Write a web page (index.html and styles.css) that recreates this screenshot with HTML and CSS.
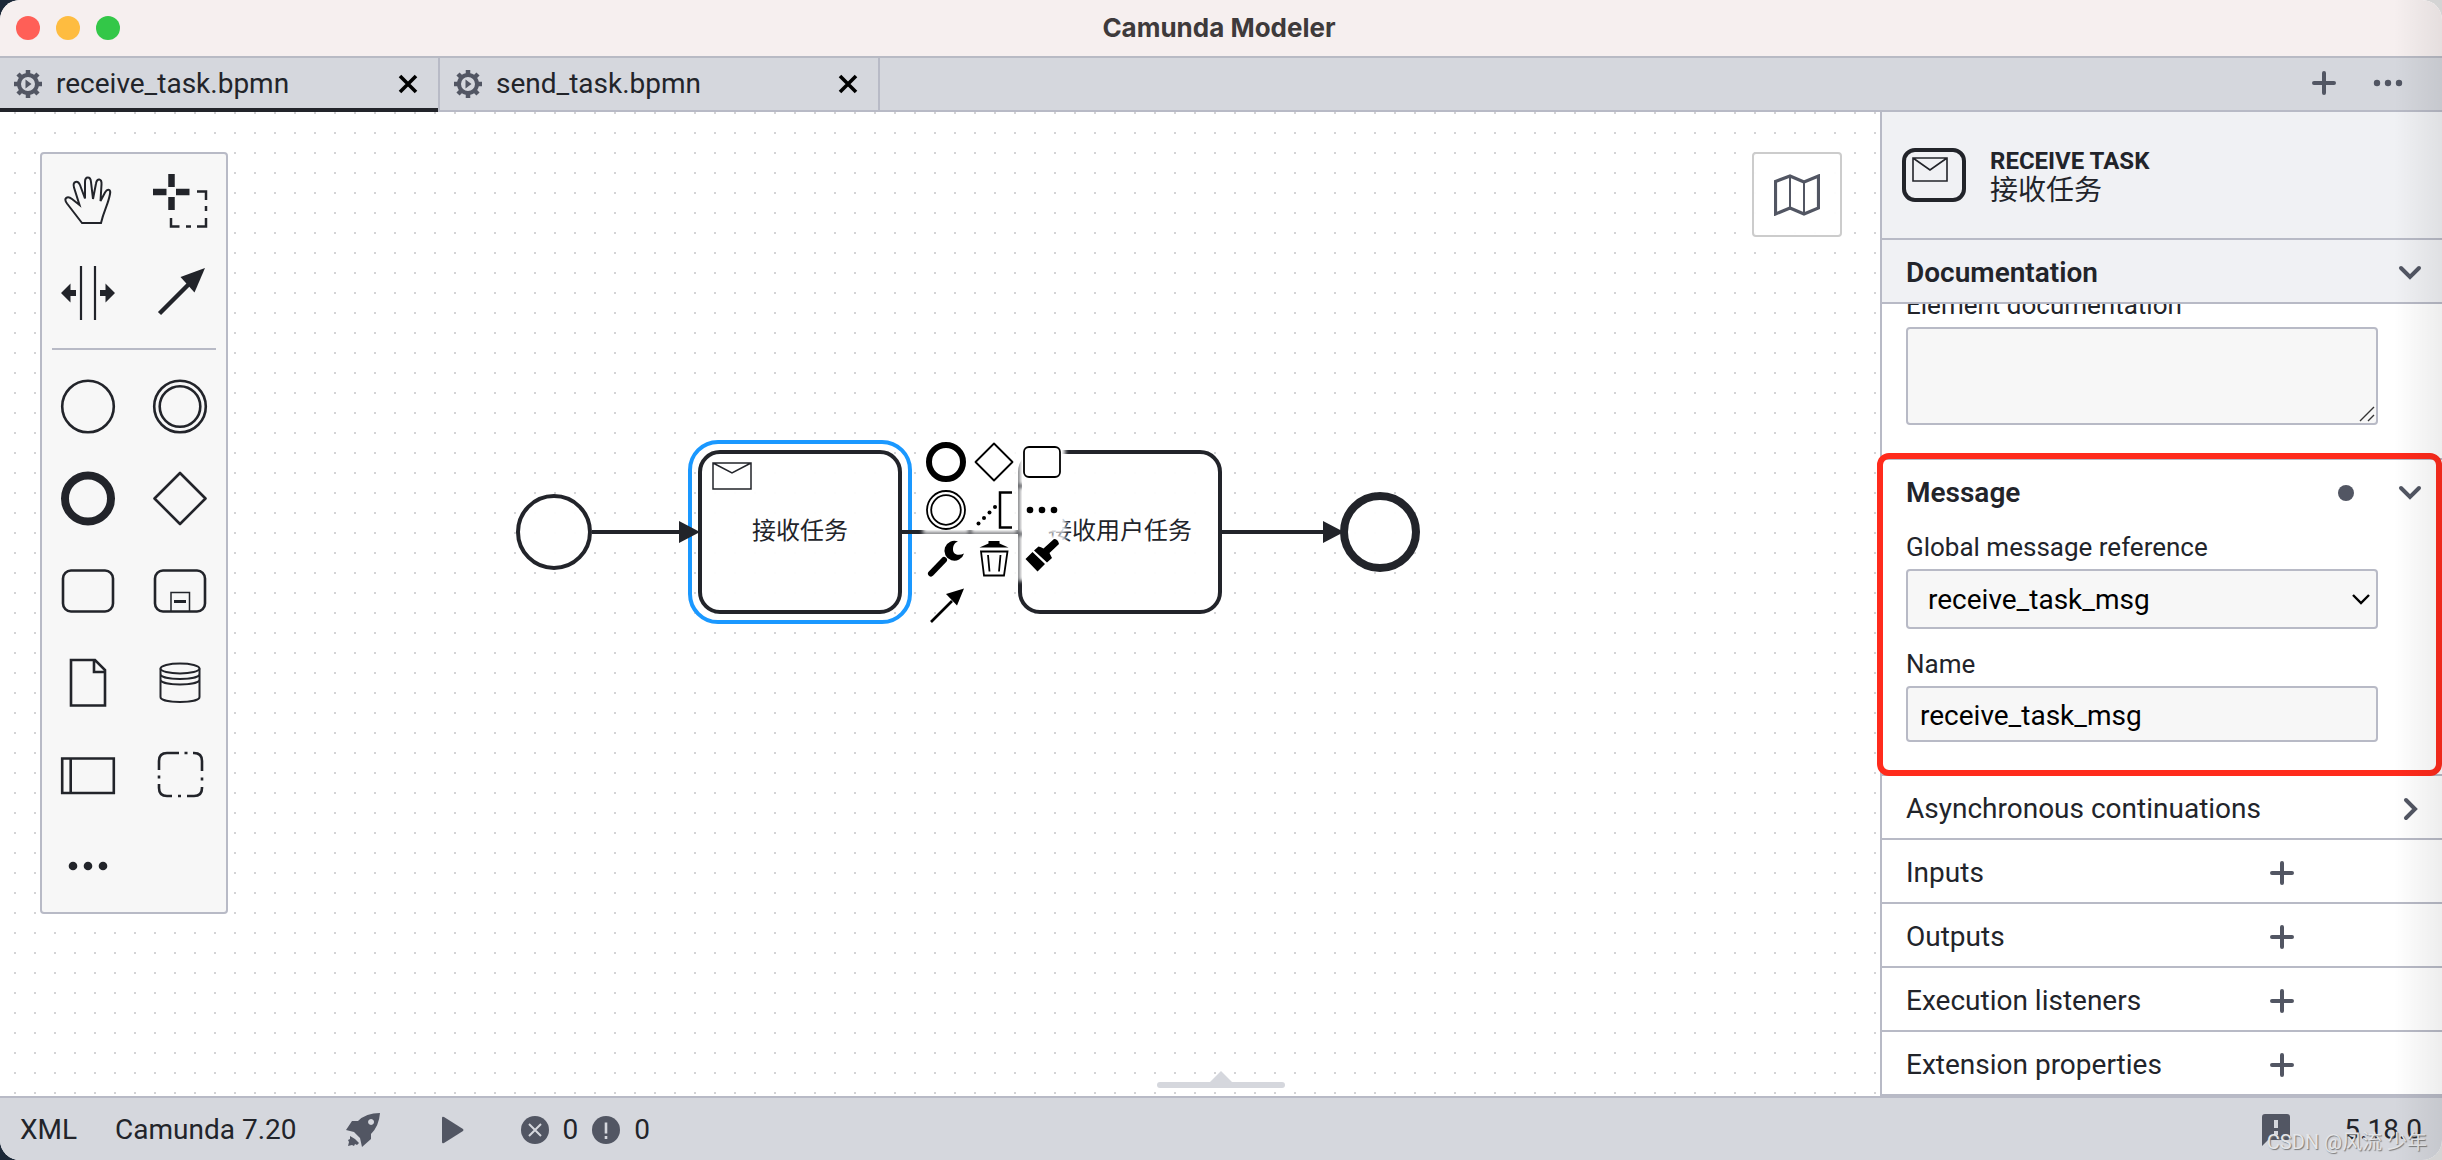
FILE: index.html
```html
<!DOCTYPE html>
<html lang="en">
<head>
<meta charset="utf-8">
<title>Camunda Modeler</title>
<link rel="stylesheet" href="styles.css">
</head>
<body>
<svg class="defs" aria-hidden="true">
  <symbol id="gear" viewBox="0 0 28 28">
    <circle cx="14" cy="14" r="9" fill="none" stroke="currentColor" stroke-width="4"/>
    <path d="M14 0v5M14 23v5M0 14h5M23 14h5M4 4l4 4M20 20l4 4M4 24l4-4M20 8l4-4" stroke="currentColor" stroke-width="4.500"/>
    <path d="M11.500 9.500l6 4.500-6 4.500z" fill="currentColor"/>
  </symbol>
  <symbol id="cross" viewBox="0 0 20 20"><path d="M2 2l16 16M18 2L2 18" stroke="currentColor" stroke-width="3.600"/></symbol>
  <symbol id="plus" viewBox="0 0 24 24"><path d="M12 2v20M2 12h20" stroke="currentColor" stroke-width="4" stroke-linecap="round"/></symbol>
  <symbol id="chevron" viewBox="0 0 24 24"><path d="M3 7l9 9 9-9" fill="none" stroke="currentColor" stroke-width="4" stroke-linecap="round"/></symbol>
  <symbol id="chevron-right" viewBox="0 0 24 24"><path d="M8 3l9 9-9 9" fill="none" stroke="currentColor" stroke-width="4" stroke-linecap="round"/></symbol>
</svg>

<header class="titlebar">
  <div class="lights"><span class="light red"></span><span class="light yellow"></span><span class="light green"></span></div>
  <h1 class="app-title">Camunda Modeler</h1>
</header>

<nav class="tabs">
  <div class="tab active">
    <svg class="tab-icon"><use href="#gear"/></svg>
    <a class="tab-name" href="#receive">receive_task.bpmn</a>
    <button class="tab-close" aria-label="Close receive_task.bpmn"><svg><use href="#cross"/></svg></button>
  </div>
  <div class="tab">
    <svg class="tab-icon"><use href="#gear"/></svg>
    <a class="tab-name" href="#send">send_task.bpmn</a>
    <button class="tab-close" aria-label="Close send_task.bpmn"><svg><use href="#cross"/></svg></button>
  </div>
  <div class="tab-tools">
    <button class="tool" aria-label="New tab"><svg><use href="#plus"/></svg></button>
    <button class="tool wide" aria-label="More"><svg viewBox="0 0 30 24" fill="currentColor"><circle cx="4" cy="12" r="3.200"/><circle cx="15" cy="12" r="3.200"/><circle cx="26" cy="12" r="3.200"/></svg></button>
  </div>
</nav>

<main class="workspace">
  <section class="canvas" aria-label="Diagram">
    <svg class="diagram">
      <g transform="translate(0 -112)" fill="none" stroke="#22242a" stroke-width="4">
        <circle cx="554" cy="532" r="36" fill="#fffffff2"/>
        <rect x="700" y="452" width="200" height="160" rx="20" fill="#fffffff2"/>
        <rect x="1020" y="452" width="200" height="160" rx="20" fill="#fffffff2"/>
        <circle cx="1380" cy="532" r="36" fill="#fffffff2" stroke-width="8"/>
        <rect x="690" y="442" width="220" height="180" rx="28" stroke="#1a98ff"/>
        <path d="M592 532h90M902 532h116M1222 532h104"/>
        <path d="M679 521l21 11-21 11zM1323 521l21 11-21 11z" fill="#22242a" stroke="none"/>
        <path d="M713 463h38v26h-38zM713 463l19 10 19-10" stroke-width="1.500"/>
        <g class="node-label" stroke="none" fill="#22242a"><text x="800" y="539">接收任务</text><text x="1120" y="539">接收用户任务</text></g>
      </g>
    </svg>

    <div class="palette">
      <div class="palette-group">
        <button class="entry" aria-label="Hand tool"><svg viewBox="0 0 60 60" stroke-width="2"><path d="M24 53L9 33.500C5 28 9.500 25.500 14 29l7.500 6L16 17.500c-2-6.500 4-7.500 6-2.500l5 13.500V12c0-6 5.500-6 6 0l2 17 3-15.500c1-6 6-5 5.500 1L42.500 31l4.500-8.500c3-5 6-2.500 5 1.500C50 35 46 40 43 53z"/></svg></button>
        <button class="entry" aria-label="Lasso tool"><svg viewBox="0 0 60 60" stroke-width="2.500"><path d="M21.500 4v13M21.500 27v13M3 22h13.500M26 22h13.500" stroke-width="6.500"/><path d="M47 21.500h9V30M56 36v5M56 48v8.500h-9M36 56.500h5M29.500 56.500H21V48"/></svg></button>
        <button class="entry" aria-label="Space tool"><svg viewBox="0 0 60 60" stroke-width="2.200"><path d="M23 4v54M37 4v54"/><path d="M3 31l9.500-9.500V28H18v6h-5.500v6.500zM57 31l-9.500-9.500V28H42v6h5.500v6.500z" fill="currentColor" stroke="none"/></svg></button>
        <button class="entry" aria-label="Connect tool"><svg viewBox="0 0 60 60" stroke-width="4.500"><path d="M9.500 51.500L40 21"/><path d="M55 6L30.500 15l14 15.500z" fill="currentColor" stroke="none"/></svg></button>
      </div>
      <hr class="separator">
      <div class="palette-group">
        <button class="entry" aria-label="Start event"><svg viewBox="0 0 60 60"><circle cx="30" cy="30.500" r="25.800"/></svg></button>
        <button class="entry" aria-label="Intermediate event"><svg viewBox="0 0 60 60"><circle cx="30" cy="30.500" r="25.800"/><circle cx="30" cy="30.500" r="20.300"/></svg></button>
        <button class="entry" aria-label="End event"><svg viewBox="0 0 60 60" stroke-width="8"><circle cx="30" cy="30.500" r="23"/></svg></button>
        <button class="entry" aria-label="Gateway"><svg viewBox="0 0 60 60" stroke-linejoin="round"><path d="M30 5l25.500 25.500L30 56 4.500 30.500z"/></svg></button>
        <button class="entry" aria-label="Task"><svg viewBox="0 0 60 60"><rect x="5" y="10.500" width="50" height="41" rx="8"/></svg></button>
        <button class="entry" aria-label="Sub-process"><svg viewBox="0 0 60 60"><rect x="5" y="10.500" width="50" height="41" rx="8"/><path d="M21 51V32.500h18.500V51" stroke-width="1.500"/><path d="M24 41.500h12" stroke-width="3"/></svg></button>
        <button class="entry" aria-label="Data object"><svg viewBox="0 0 60 60"><path d="M13 8h24l10 10v35.500H13zM36 8v12h11"/></svg></button>
        <button class="entry" aria-label="Data store"><svg viewBox="0 0 60 60" stroke-width="2"><ellipse cx="30" cy="16.500" rx="19.500" ry="5"/><path d="M10.500 16.500V45c0 6.500 39 6.500 39 0V16.500M10.500 22c0 6.500 39 6.500 39 0M10.500 27.500c0 6.500 39 6.500 39 0"/></svg></button>
        <button class="entry" aria-label="Pool"><svg viewBox="0 0 60 60"><path d="M4.200 14.500h51.600v34.500H4.200zM12.700 14.500V49"/></svg></button>
        <button class="entry" aria-label="Group"><svg viewBox="0 0 60 60"><path d="M9 26v-9q0-8 8-8h12M34.500 9h3M43 9h1q8 0 8 8v10M52 33.500v3M52 43v1q0 8-8 8h-7M31 52h-3M22 52h-5q-8 0-8-8v-4M9 34.500v-3"/></svg></button>
        <button class="entry" aria-label="More elements"><svg viewBox="0 0 60 60" stroke-width="0"><g fill="currentColor"><circle cx="15" cy="30" r="4.300"/><circle cx="30" cy="30" r="4.300"/><circle cx="45" cy="30" r="4.300"/></g></svg></button>
      </div>
    </div>

    <div class="context-pad">
      <button class="pad-entry" aria-label="Append end event"><svg viewBox="0 0 40 40" stroke-width="6"><circle cx="20" cy="20" r="17"/></svg></button>
      <button class="pad-entry" aria-label="Append gateway"><svg viewBox="0 0 40 40" stroke-linejoin="round"><path d="M20 1.500L38.500 20 20 38.500 1.500 20z"/></svg></button>
      <button class="pad-entry" aria-label="Append task"><svg viewBox="0 0 40 40"><rect x="2" y="5" width="36" height="30" rx="5"/></svg></button>
      <button class="pad-entry" aria-label="Append intermediate event"><svg viewBox="0 0 40 40"><circle cx="20" cy="20" r="19"/><circle cx="20" cy="20" r="14.800"/></svg></button>
      <button class="pad-entry" aria-label="Add text annotation"><svg viewBox="0 0 40 40"><path d="M38 2.500H26v35h12" stroke-width="2.500"/><g fill="#000" stroke="none"><circle cx="4.500" cy="33.500" r="2"/><circle cx="10" cy="28" r="2"/><circle cx="15.500" cy="22.500" r="2"/><circle cx="21" cy="17" r="2"/></g></svg></button>
      <button class="pad-entry" aria-label="Append element"><svg viewBox="0 0 40 40"><g fill="#000" stroke="none"><circle cx="8" cy="20" r="3.300"/><circle cx="20" cy="20" r="3.300"/><circle cx="32" cy="20" r="3.300"/></g></svg></button>
      <button class="pad-entry" aria-label="Change element"><svg viewBox="0 0 40 40"><path d="M5 35.500L18 22" stroke-width="6" stroke-linecap="round"/><path d="M32 3.500A10 10 0 1 0 38 15.500C33 18 27 17 27 11.500 27 7 29 4.500 32 3.500z" fill="#000" stroke="none"/></svg></button>
      <button class="pad-entry" aria-label="Delete"><svg viewBox="0 0 40 40" stroke-width="1.800"><path d="M5.500 9.500l9-4V3h11v2.500l9 4z" fill="#000" stroke="none"/><path d="M7 13.500h26.500L30 37.500H10zM14 17l1.500 16.500M26.500 17L25 33.500"/></svg></button>
      <button class="pad-entry" aria-label="Set color"><svg viewBox="0 0 40 40"><path d="M3.500 21l7-7L23 26l-7.500 7.500zM12 12.500l4.500-4q2.500.500 5 2L32 1q4 0 5 5L27.500 15l2.500 5-5 4.500z" fill="#000" stroke="none"/></svg></button>
      <button class="pad-entry" aria-label="Connect"><svg viewBox="0 0 40 40" stroke-width="2.600"><path d="M5 36l21-21"/><path d="M38 2.500L20 8l11 11.500z" fill="#000" stroke="none"/></svg></button>
    </div>

    <button class="minimap" aria-label="Toggle minimap"><svg viewBox="0 0 46 42" fill="none" stroke="currentColor"><path d="M1.500 7.500L16 2l14 6 14.500-6v32L30 40l-14-6-14.500 6z" stroke-width="3.200"/><path d="M16 2v32M30 8v32" stroke-width="2"/></svg></button>
    <button class="handle" aria-label="Open panel"><svg viewBox="0 0 128 18"><path d="M52 12L64 0l12 12z"/><rect y="11" width="128" height="6" rx="3"/></svg></button>
  </section>

  <aside class="properties">
    <header class="prop-header">
      <svg class="prop-icon" viewBox="0 0 64 54" fill="none" stroke="currentColor"><rect x="2" y="2" width="60" height="50" rx="11" stroke-width="4"/><path d="M11 10h34v23H11zM11 10l17 12 17-12" stroke-width="1.600"/></svg>
      <div class="prop-title"><div class="prop-type">RECEIVE TASK</div><div class="prop-name">接收任务</div></div>
    </header>
    <section class="group">
      <h2 class="group-head open tinted">Documentation<button class="icon-button" aria-label="Toggle Documentation"><svg><use href="#chevron"/></svg></button></h2>
      <div class="doc-body">
        <label for="documentation">Element documentation</label>
        <div class="textarea-wrap">
          <textarea id="documentation"></textarea>
          <svg class="grip" viewBox="0 0 16 16"><path d="M1 15L15 1M9 15l6-6" stroke="#333" stroke-width="1.400"/></svg>
        </div>
      </div>
    </section>
    <section class="group marked">
      <h2 class="group-head open">Message<span class="edited"></span><button class="icon-button" aria-label="Toggle Message"><svg><use href="#chevron"/></svg></button></h2>
      <div class="group-body">
        <label for="reference">Global message reference</label>
        <div class="select-wrap">
          <select id="reference"><option>receive_task_msg</option></select>
          <svg class="select-arrow" viewBox="0 0 20 12"><path d="M2 2l8 8 8-8" fill="none" stroke="#000" stroke-width="2.400"/></svg>
        </div>
        <label for="name">Name</label>
        <input id="name" type="text" value="receive_task_msg">
      </div>
    </section>
    <section class="group"><h2 class="group-head">Asynchronous continuations<button class="icon-button" aria-label="Toggle Asynchronous continuations"><svg><use href="#chevron-right"/></svg></button></h2></section>
    <section class="group"><h2 class="group-head list">Inputs<button class="icon-button" aria-label="Add input"><svg><use href="#plus"/></svg></button></h2></section>
    <section class="group"><h2 class="group-head list">Outputs<button class="icon-button" aria-label="Add output"><svg><use href="#plus"/></svg></button></h2></section>
    <section class="group"><h2 class="group-head list">Execution listeners<button class="icon-button" aria-label="Add execution listener"><svg><use href="#plus"/></svg></button></h2></section>
    <section class="group"><h2 class="group-head list">Extension properties<button class="icon-button" aria-label="Add extension property"><svg><use href="#plus"/></svg></button></h2></section>
  </aside>
</main>

<footer class="statusbar">
  <button class="status-text">XML</button>
  <button class="status-text engine">Camunda 7.20</button>
  <button class="status-icon" aria-label="Deploy"><svg width="36" height="36" viewBox="0 0 36 36" fill="currentColor"><path fill-rule="evenodd" d="M35 1Q34 14 26 22v5l-9 8-2-9-6-6-8-2 6-9h6Q21 1 35 1zM26 7a3 3 0 1 0 .1 0z"/><path d="M5 24l5 3 4 4-2 2-2-1-1 2-2-1-4 1 1-4-1-2 2-1z"/></svg></button>
  <button class="status-icon play" aria-label="Run"><svg width="24" height="28" viewBox="0 0 24 28" fill="currentColor"><path d="M1 2q0-2 2-1l19 12q1 1 0 2L3 27q-2 1-2-1z"/></svg></button>
  <button class="count">
    <svg viewBox="0 0 28 28"><circle cx="14" cy="14" r="14" fill="currentColor"/><path d="M8 8l12 12M20 8L8 20" stroke="#d5d7dd" stroke-width="2"/></svg><span>0</span>
    <svg viewBox="0 0 28 28"><circle cx="14" cy="14" r="14" fill="currentColor"/><path d="M14 6.500v11M14 20v3" stroke="#d5d7dd" stroke-width="2.600"/></svg><span>0</span>
  </button>
  <button class="feedback" aria-label="Give feedback"><svg width="28" height="32" viewBox="0 0 28 32" fill="currentColor"><path fill-rule="evenodd" d="M3 0h22q3 0 3 3v20q0 3-3 3H6l-6 6V3Q0 0 3 0zM12 6v8h4V6zM12 17v4h4v-4z"/></svg></button>
  <button class="status-text">5.18.0</button>
  <span class="watermark">CSDN @风流 少年</span>
</footer>
</body>
</html>
```
FILE: styles.css
```css
* { box-sizing: border-box; }
html {
  height: 100%;
  background: linear-gradient(90deg, #1c2838 50%, #d4d4d4 50%);
}
body {
  position: relative;
  display: flex;
  flex-direction: column;
  min-height: 100%;
  margin: 0;
  border-radius: 20px;
  overflow: hidden;
  background: #fff;
  color: #22242a;
  font: 28px/34px Roboto, "Noto Sans CJK SC", sans-serif;
}
/* soft shade along the window's right edge */
body::after {
  content: "";
  position: absolute;
  inset: 0 0 0 auto;
  width: 48px;
  background: linear-gradient(90deg, transparent, rgba(0, 0, 0, .07));
  pointer-events: none;
}
button {
  display: flex;
  align-items: center;
  justify-content: center;
  padding: 0;
  border: 0;
  background: none;
  color: #525663;
  font: inherit;
}
.defs { position: absolute; width: 0; height: 0; }

.titlebar {
  display: grid;
  grid-template-columns: 1fr auto 1fr;
  align-items: center;
  height: 58px;
  padding: 0 20px 0 16px;
  background: #f6efef;
  border-bottom: 2px solid #b8bac4;
}
.lights { display: flex; gap: 16px; }
.light { width: 24px; height: 24px; border-radius: 50%; }
.red { background: #ff5f57; }
.yellow { background: #febc40; }
.green { background: #33c748; }
.app-title {
  margin: 0;
  color: #3e3a3b;
  font: 700 26px/32px Inter, sans-serif;
}

.tabs {
  display: flex;
  height: 54px;
  background: #d5d7dd;
  box-shadow: inset 0 -2px #b8bac6;
}
.tab {
  display: flex;
  align-items: center;
  width: 440px;
  padding: 0 20px 2px 14px;
  border-right: 2px solid #b8bac6;
}
.active { box-shadow: inset 0 -4px #22242a; }
.tab-icon { width: 28px; height: 28px; color: #525663; }
.tab-name { flex: 1; margin-left: 14px; color: inherit; text-decoration: none; }
.tab-close { color: #000; }
.tab-close svg { width: 20px; height: 20px; }
.tab-tools { display: flex; gap: 37px; align-items: center; margin-left: auto; padding: 0 39px 4px 0; }
.tool svg { width: 24px; height: 24px; }
.wide svg { width: 30px; }

.workspace { display: flex; flex: 1; }
.canvas {
  position: relative;
  flex: 1;
  background: conic-gradient(from 90deg at 18px 18px, #d4d4d6 90deg, transparent 0) -4px 2px / 20px 20px;
}
.diagram { position: absolute; width: 100%; height: 100%; }
.node-label { font: 24px "Noto Sans CJK SC", sans-serif; text-anchor: middle; }

.palette {
  position: absolute;
  top: 40px;
  left: 40px;
  width: 188px;
  border: 2px solid #b8bac6;
  border-radius: 4px;
  background: #f7f7f7;
}
.palette-group { display: grid; grid-template-columns: repeat(2, 92px); }
.entry { height: 92px; color: #22242a; }
.entry svg { width: 60px; height: 60px; fill: none; stroke: currentColor; }
.entry svg:not([stroke-width]) { stroke-width: 2.6; }
.separator { height: 2px; margin: 10px; border: 0; background: #b8bac6; }

.context-pad {
  position: absolute;
  top: 330px;
  left: 926px;
  display: grid;
  grid-template-columns: repeat(3, 40px);
  gap: 8px;
}
.pad-entry { height: 40px; background: #fff; box-shadow: 0 0 4px 3px #fff; }
.pad-entry:last-child { background: none; box-shadow: none; }
.pad-entry svg { width: 40px; height: 40px; fill: none; stroke: #000; overflow: visible; }
.pad-entry svg:not([stroke-width]) { stroke-width: 1.8; }

.minimap {
  position: absolute;
  top: 40px;
  right: 38px;
  width: 90px;
  height: 85px;
  border: 2px solid #ccc;
  border-radius: 4px;
  background: #fffffff2;
}
.minimap svg { width: 46px; height: 42px; }
.handle { position: absolute; bottom: 7px; left: 1157px; }
.handle svg { display: block; width: 128px; height: 18px; fill: #d5d7dd; }

.properties {
  display: flex;
  flex-direction: column;
  width: 562px;
  border-left: 2px solid #b8bac6;
}
.prop-header {
  display: flex;
  align-items: center;
  gap: 24px;
  height: 128px;
  padding: 0 20px;
  border-bottom: 2px solid #b8bac6;
  background: #f0f1f4;
}
.prop-icon { width: 64px; height: 54px; }
.prop-title { padding-top: 4px; }
.prop-type { font-size: 24px; font-weight: 700; line-height: 28px; }
.prop-name { line-height: 32px; }

.group { border-bottom: 2px solid #b8bac6; }
.group-head {
  display: flex;
  align-items: center;
  justify-content: space-between;
  height: 62px;
  margin: 0;
  padding: 3px 20px 0 24px;
  font-size: 28px;
  font-weight: 400;
}
.open { font-weight: 600; }
.tinted { height: 64px; border-bottom: 2px solid #b8bac6; background: #f0f1f4; }
.list { padding-right: 148px; }
.icon-button svg { width: 24px; height: 24px; }
.edited { width: 16px; height: 16px; margin: 0 44px 0 auto; border-radius: 50%; background: #525663; }

label { display: block; margin-bottom: 5px; font-size: 26px; }
textarea, select, input {
  display: block;
  width: 100%;
  border: 2px solid #b8bac6;
  border-radius: 4px;
  background: #f7f7f7;
  color: #000;
  font: inherit;
}
.doc-body {
  display: flex;
  flex-direction: column;
  justify-content: flex-end;
  height: 154px;
  padding: 0 64px 33px 24px;
  overflow: hidden;
}
.textarea-wrap { position: relative; }
textarea { height: 98px; resize: none; }
.grip { position: absolute; right: 3px; bottom: 3px; width: 16px; height: 16px; pointer-events: none; }
.group-body { padding: 8px 64px 32px 24px; }
.select-wrap { position: relative; margin-bottom: 18px; }
select { height: 60px; padding: 2px 20px 0; appearance: none; }
.select-arrow { position: absolute; top: 24px; right: 7px; width: 20px; height: 12px; pointer-events: none; }
input { height: 56px; padding: 2px 12px 0; }

/* highlighted section */
.marked { position: relative; }
.marked::after {
  content: "";
  position: absolute;
  inset: -7px 0 -2px -5px;
  border: 6px solid #ff2b1c;
  border-radius: 12px;
  pointer-events: none;
}

.statusbar {
  position: relative;
  display: flex;
  align-items: center;
  height: 64px;
  padding: 2px 20px 0;
  border-top: 2px solid #b8bac6;
  background: #d5d7dd;
}
.status-text { color: inherit; }
.engine { margin-left: 38px; }
.status-icon { margin-left: 48px; }
.play { margin-left: 60px; }
.count { gap: 14px; margin-left: 56px; }
.count svg { width: 28px; height: 28px; }
.count span { color: #22242a; }
.feedback { margin: 0 54px 0 auto; }
.watermark {
  position: absolute;
  right: 15px;
  bottom: 4px;
  color: #e4e5e8;
  font-size: 20px;
  line-height: 28px;
  text-shadow: 1px 1px 1px #777;
}
```
